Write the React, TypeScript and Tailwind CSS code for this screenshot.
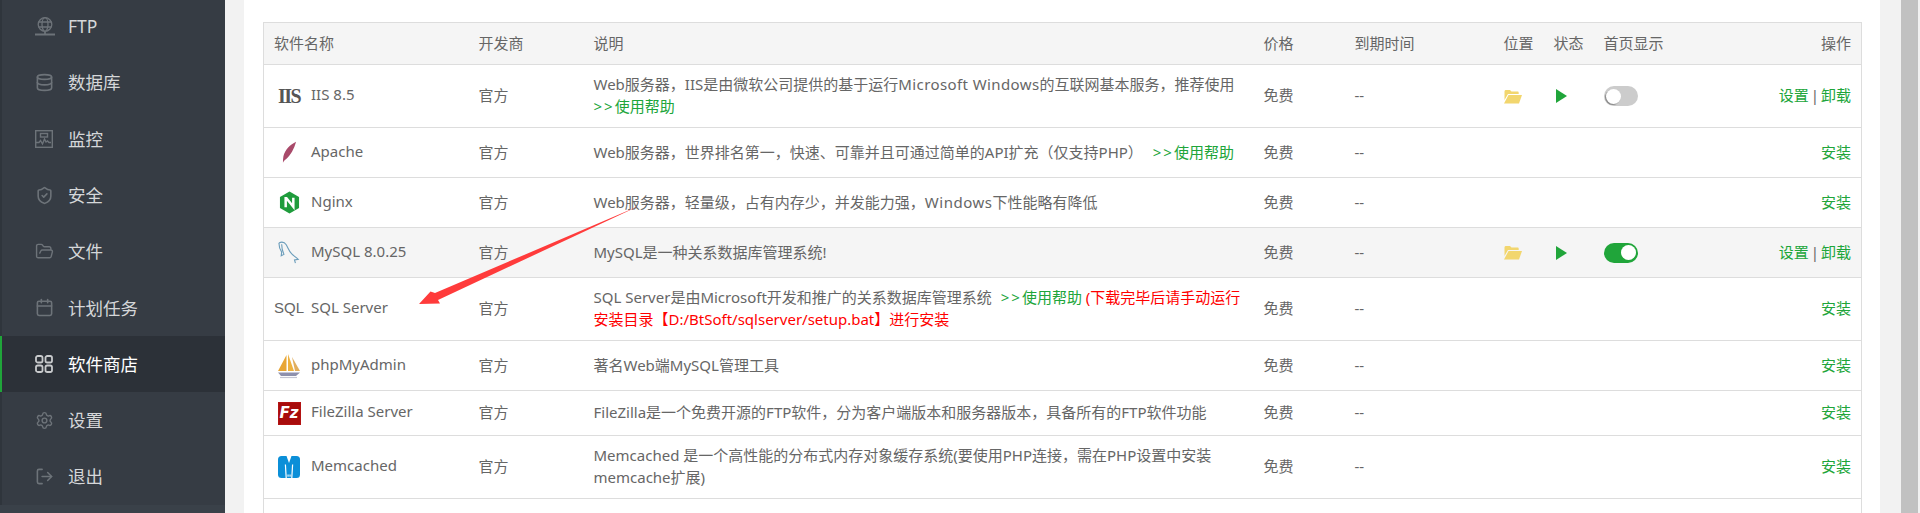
import type { ReactNode } from "react";
import { Database, FolderOpen, LogOut, Settings, ShieldCheck, Calendar } from "lucide-react";

const FONT = "font-['Noto_Sans','Noto_Sans_CJK_SC',sans-serif]";

function FtpIcon() {
  return (
    <svg viewBox="0 0 20 19" className="h-[19px] w-[20px]" fill="none" stroke="currentColor" strokeWidth="1.300">
      <circle cx="10" cy="7.500" r="6.800" />
      <ellipse cx="10" cy="7.500" rx="3" ry="6.800" />
      <path d="M3.500 5h13M3.500 10h13" />
      <path d="M10 14.500v2M0 17.500h20" strokeWidth="1.800" />
    </svg>
  );
}

function MonitorIcon() {
  return (
    <svg viewBox="0 0 18 18" className="h-[18px] w-[18px]" fill="none" stroke="currentColor" strokeWidth="1.400">
      <rect x="0.700" y="0.700" width="16.600" height="16.600" />
      <path d="M1 12.500h3l1.500-2 2 3.500 2-5 1.500 3 1.500-1 1.500 1.500h2" />
      <rect x="5.500" y="3.500" width="7" height="3.500" />
    </svg>
  );
}

function GridIcon() {
  return (
    <svg viewBox="0 0 18 18" className="h-[18px] w-[18px]" fill="none" stroke="currentColor" strokeWidth="1.800">
      <rect x="1" y="1" width="6.500" height="6.500" rx="1.800" />
      <rect x="10.500" y="1" width="6.500" height="6.500" rx="1.800" />
      <rect x="1" y="10.500" width="6.500" height="6.500" rx="1.800" />
      <rect x="10.500" y="10.500" width="6.500" height="6.500" rx="1.800" />
    </svg>
  );
}

const iconClass = "h-[19px] w-[19px]";

const menu: { label: string; icon: ReactNode; active?: boolean }[] = [
  { label: "FTP", icon: <FtpIcon /> },
  { label: "数据库", icon: <Database className={iconClass} strokeWidth={2} /> },
  { label: "监控", icon: <MonitorIcon /> },
  { label: "安全", icon: <ShieldCheck className={iconClass} strokeWidth={2} /> },
  { label: "文件", icon: <FolderOpen className={iconClass} strokeWidth={1.800} /> },
  { label: "计划任务", icon: <Calendar className={iconClass} strokeWidth={2} /> },
  { label: "软件商店", icon: <GridIcon />, active: true },
  { label: "设置", icon: <Settings className={iconClass} strokeWidth={1.800} /> },
  { label: "退出", icon: <LogOut className={iconClass} strokeWidth={2} /> },
];

function Sidebar() {
  return (
    <aside className="w-[225px] shrink-0 bg-[#3a4149]">
      <ul className="-mt-[2px]">
        {menu.map((item) => (
          <li
            key={item.label}
            className={
              item.active
                ? "flex h-[56.300px] items-center gap-[13px] border-l-2 border-[#20a53a] bg-[#2c3138] pl-[33px] text-[17.500px] text-white"
                : "flex h-[56.300px] items-center gap-[13px] border-l-2 border-[#2f353c] bg-[#363c44] pl-[33px] text-[17.500px] text-[#d5d7d9]"
            }
          >
            <span className={item.active ? "w-[20px] text-[#c8cacc]" : "w-[20px] text-[#6d7379]"}>{item.icon}</span>
            <span>{item.label}</span>
          </li>
        ))}
      </ul>
    </aside>
  );
}

function HelpLink({ className = "" }: { className?: string }) {
  return (
    <span className={`whitespace-nowrap text-[#20a53a] ${className}`}>
      <span className="tracking-[2px]">&gt;&gt;</span>使用帮助
    </span>
  );
}

function NginxLogo() {
  return (
    <svg viewBox="0 0 22 24" className="h-[23px] w-[21px]">
      <path d="M11 0.500 21 6.200v11.600L11 23.500 1 17.800V6.200z" fill="#1f9c3c" />
      <path d="M7 17V7.500h0.800L15 16.500h0V7" fill="none" stroke="#fff" strokeWidth="2.600" />
    </svg>
  );
}

function ApacheLogo() {
  return (
    <svg viewBox="0 0 16 24" className="h-[23px] w-[15px]">
      <path d="M15 0.500C9 3.500 3 9 1.500 16c-0.400 2.500-0.500 4.500-0.500 7 1-2 2-3 3.500-4C9 15 13 8 15 0.500z" fill="#a94a6a" />
    </svg>
  );
}

function MysqlLogo() {
  return (
    <svg viewBox="0 0 24 26" className="h-[24px] w-[22px]" fill="none" stroke="#6b9dbb" strokeWidth="1.200">
      <path d="M1 2c3-1.500 6-1 8 2 2 3.500 3 7 6 10 2 2 5 4 7 6l-4 0.500 1 3.500" />
      <path d="M1 2c0 3 1 7 3 10l-0.500 4 3-1.500c-2-4-2.500-8-2.500-11" />
    </svg>
  );
}

function PhpMyAdminLogo() {
  return (
    <svg viewBox="0 0 24 26" className="h-[26px] w-[24px]">
      <path d="M9.500 2 1 18h8.500z" fill="#e8a534" />
      <path d="M11 1v17h6z" fill="#eeb23f" />
      <path d="M15 4l8 14h-5z" fill="#d99a35" opacity="0.800" />
      <path d="M1 19.500h22l-4 3.500H4z" fill="#8d90ad" />
      <path d="M3 24.500h17" stroke="#c4c5d4" strokeWidth="1.200" />
    </svg>
  );
}

function FileZillaLogo() {
  return (
    <span className="flex h-[23px] w-[23px] items-center justify-center border border-dashed border-[#fff] bg-[#a80c0c] font-['DejaVu_Sans',sans-serif] text-[15px] font-bold italic leading-none text-white outline outline-1 -outline-offset-1 outline-[#b31313]">
      Fz
    </span>
  );
}

function MemcachedLogo() {
  return (
    <svg viewBox="0 0 22 22" className="h-[22px] w-[22px]">
      <rect x="0" y="0" width="22" height="22" rx="3.500" fill="#0b8fd8" />
      <path d="M8.200 22 7.400 8.500M13.800 22l0.800-13.500" stroke="#fff" strokeWidth="1.200" />
      <path d="M8.500 0h5L11 7z" fill="#fff" />
      <rect x="9.500" y="18.500" width="1.100" height="2.200" fill="#fff" />
      <rect x="11.500" y="18.500" width="1.100" height="2.200" fill="#fff" />
    </svg>
  );
}

function FolderIcon() {
  return (
    <svg viewBox="0 0 18 15" className="h-[15px] w-[18px]">
      <path d="M0.500 2.500C0.500 1.500 1.200 1 2 1h4l1.500 1.500h6c0.800 0 1.200 0.500 1.200 1.200V5H4L0.500 11z" fill="#f2d66e" />
      <path d="M4.500 6H18l-3 8.500H0z" fill="#f2d66e" />
    </svg>
  );
}

function PlayIcon() {
  return (
    <svg viewBox="0 0 11 14" className="ml-[2px] h-[14px] w-[11px]">
      <path d="M0 0 11 7 0 14z" fill="#20a53a" />
    </svg>
  );
}

function Toggle({ on }: { on: boolean }) {
  return (
    <span
      className={
        on
          ? "flex h-[20px] w-[34px] items-center justify-end rounded-full bg-[#20a53a] pr-[2px]"
          : "flex h-[20px] w-[34px] items-center justify-start rounded-full bg-[#cccccc] pl-[2px]"
      }
    >
      <span
        className={
          on
            ? "h-[15px] w-[15px] rounded-full bg-white"
            : "h-[15px] w-[15px] rounded-full bg-white shadow-[-1px_1px_1px_rgba(0,0,0,0.350)]"
        }
      />
    </span>
  );
}

type Row = {
  name: string;
  logo: ReactNode;
  desc: ReactNode;
  height: string;
  installed?: boolean;
  toggleOn?: boolean;
  shaded?: boolean;
};

const rows: Row[] = [
  {
    name: "IIS 8.5",
    logo: (
      <span className="font-['Liberation_Serif',serif] text-[20px] font-bold leading-none tracking-[-1.500px] text-[#555]">
        IIS
      </span>
    ),
    desc: (
      <>
        Web服务器，IIS是由微软公司提供的基于运行<span className="tracking-[0.400px]">Microsoft Windows</span>
        的互联网基本服务，推荐使用 <HelpLink />
      </>
    ),
    height: "h-[63px]",
    installed: true,
    toggleOn: false,
  },
  {
    name: "Apache",
    logo: <ApacheLogo />,
    desc: (
      <>
        Web服务器，世界排名第一，快速、可靠并且可通过简单的API扩充（仅支持PHP） <HelpLink className="ml-[6px]" />
      </>
    ),
    height: "h-[50px]",
  },
  {
    name: "Nginx",
    logo: <NginxLogo />,
    desc: (
      <>
        Web服务器，轻量级，占有内存少，并发能力强，<span className="tracking-[0.500px]">Windows</span>下性能略有降低
      </>
    ),
    height: "h-[50px]",
  },
  {
    name: "MySQL 8.0.25",
    logo: <MysqlLogo />,
    desc: "MySQL是一种关系数据库管理系统!",
    height: "h-[50px]",
    installed: true,
    toggleOn: true,
    shaded: true,
  },
  {
    name: "SQL Server",
    logo: <span className="-mt-[3px] font-['Liberation_Sans',sans-serif] text-[15px] leading-none text-[#666]">SQL</span>,
    desc: (
      <>
        SQL Server是由Microsoft开发和推广的关系数据库管理系统 <HelpLink className="ml-[5px]" />{" "}
        <span className="text-[#ff0000]">(下载完毕后请手动运行安装目录【D:/BtSoft/sqlserver/setup.bat】进行安装</span>
      </>
    ),
    height: "h-[63px]",
  },
  {
    name: "phpMyAdmin",
    logo: <PhpMyAdminLogo />,
    desc: "著名Web端MySQL管理工具",
    height: "h-[50px]",
  },
  {
    name: "FileZilla Server",
    logo: <FileZillaLogo />,
    desc: "FileZilla是一个免费开源的FTP软件，分为客户端版本和服务器版本，具备所有的FTP软件功能",
    height: "h-[45px]",
  },
  {
    name: "Memcached",
    logo: <MemcachedLogo />,
    desc: "Memcached 是一个高性能的分布式内存对象缓存系统(要使用PHP连接，需在PHP设置中安装memcache扩展)",
    height: "h-[63px]",
  },
];

const headers: { label: string; width: string; right?: boolean }[] = [
  { label: "软件名称", width: "w-[205px]" },
  { label: "开发商", width: "w-[115px]" },
  { label: "说明", width: "w-[670px]" },
  { label: "价格", width: "w-[91px]" },
  { label: "到期时间", width: "w-[149px]" },
  { label: "位置", width: "w-[50px]" },
  { label: "状态", width: "w-[50px]" },
  { label: "首页显示", width: "w-[100px]" },
  { label: "操作", width: "w-[168px]", right: true },
];

const cell = "px-[10px] py-0 align-middle";
// text sits a pixel higher than the icons in the same row
const textCell = "px-[10px] pt-0 pb-[2px] align-middle";

function SoftTable() {
  return (
    <table className="w-[1598px] table-fixed border-collapse border border-[#dddddd] text-[15px] leading-[22px] text-[#666]">
      <thead>
        <tr className="h-[42px] border-b border-[#dddddd] bg-[#f5f5f5]">
          {headers.map((h) => (
            <th key={h.label} className={`${h.width} ${textCell} font-normal ${h.right ? "text-right" : "text-left"}`}>
              {h.label}
            </th>
          ))}
        </tr>
      </thead>
      <tbody>
        {rows.map((row) => (
          <tr key={row.name} className={`${row.height} border-b border-[#dddddd] ${row.shaded ? "bg-[#f5f5f5]" : ""}`}>
            <td className={cell}>
              <div className="flex items-center gap-[8px] pl-[1px]">
                <span className="flex h-[24px] w-[28px] items-center justify-center">{row.logo}</span>
                <span className="-mt-[4px]">{row.name}</span>
              </div>
            </td>
            <td className={textCell}>官方</td>
            <td className={textCell}>{row.desc}</td>
            <td className={textCell}>免费</td>
            <td className={textCell}>--</td>
            <td className={cell}>{row.installed && <FolderIcon />}</td>
            <td className={cell}>{row.installed && <PlayIcon />}</td>
            <td className={cell}>{row.installed && <Toggle on={!!row.toggleOn} />}</td>
            <td className={`${textCell} text-right text-[#20a53a]`}>
              {row.installed ? (
                <>
                  设置<span className="mx-[2px] text-[#666]">|</span>卸载
                </>
              ) : (
                "安装"
              )}
            </td>
          </tr>
        ))}
        <tr className="h-[50px]">
          <td colSpan={9} />
        </tr>
      </tbody>
    </table>
  );
}

// the red annotation arrow drawn on top of the screenshot
function Arrow() {
  return (
    <svg className="pointer-events-none absolute left-0 top-0 h-[513px] w-[1920px]" viewBox="0 0 1920 513">
      <polygon points="640,205.500 435,293 430.500,291.500 419,304 440,303.500 438,300" fill="#ff3b3b" />
    </svg>
  );
}

export default function App() {
  return (
    <div className={`relative flex h-[513px] w-[1920px] overflow-hidden bg-[#f2f2f2] ${FONT}`}>
      <Sidebar />
      <main className="ml-[19px] h-full w-[1636px] shrink-0 bg-white pl-[19px] pt-[22px]">
        <SoftTable />
      </main>
      <div className="ml-[21px] h-full w-[19px] bg-[#f1f1f1]">
        <div className="h-full w-[17px] bg-[#c1c1c1]" />
      </div>
      <Arrow />
    </div>
  );
}
